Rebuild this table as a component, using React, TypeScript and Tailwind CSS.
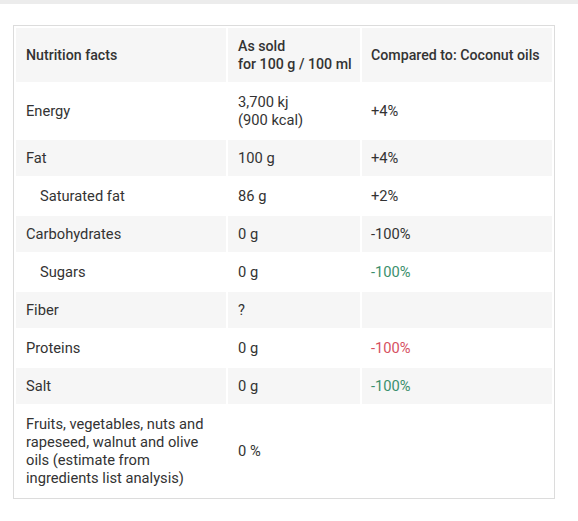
import React from "react";

type Row = {
  label: string;
  sold: React.ReactNode;
  compare?: string;
  tone?: "green" | "red";
  indent?: boolean;
};

const rows: Row[] = [
  { label: "Energy", sold: <>3,700 kj<br />(900 kcal)</>, compare: "+4%" },
  { label: "Fat", sold: "100 g", compare: "+4%" },
  { label: "Saturated fat", sold: "86 g", compare: "+2%", indent: true },
  { label: "Carbohydrates", sold: "0 g", compare: "-100%" },
  { label: "Sugars", sold: "0 g", compare: "-100%", tone: "green", indent: true },
  { label: "Fiber", sold: "?" },
  { label: "Proteins", sold: "0 g", compare: "-100%", tone: "red" },
  { label: "Salt", sold: "0 g", compare: "-100%", tone: "green" },
  {
    label: "Fruits, vegetables, nuts and rapeseed, walnut and olive oils (estimate from ingredients list analysis)",
    sold: "0 %",
  },
];

export default function App() {
  return (
    <div className="min-h-[521px] bg-white text-[14.7px] leading-[18px] text-[#333]" style={{ fontFamily: "Roboto, 'Liberation Sans', sans-serif" }}>
      <div className="h-1 bg-[#ececec]" />
      <div className="ml-[13px] mt-[21px] w-[542px] border border-[#dcdcdc]">
        <table className="w-full table-fixed border-separate border-spacing-[2px] text-left">
          <thead className="text-[14.2px]">
            <tr className="bg-[#f6f6f6]">
              <th className="w-[210px] px-[10px] py-[9px] align-middle font-medium">Nutrition facts</th>
              <th className="w-[132px] whitespace-nowrap px-[10px] py-[9px] align-middle font-medium">
                As sold
                <br />
                for 100 g / 100 ml
              </th>
              <th className="w-[190px] whitespace-nowrap px-[9px] py-[9px] align-middle font-medium">Compared to: Coconut oils</th>
            </tr>
          </thead>
          <tbody>
            {rows.map((r, i) => (
              <tr key={r.label} className={i % 2 === 1 ? "bg-[#f6f6f6]" : "bg-white"}>
                <td className={`py-[9px] pr-[10px] align-middle ${r.indent ? "pl-[24px]" : "pl-[10px]"}`}>{r.label}</td>
                <td className="px-[10px] py-[9px] align-middle">{r.sold}</td>
                <td
                  className={`px-[9px] py-[9px] align-middle ${
                    r.tone === "green" ? "text-[#3b8f6c]" : r.tone === "red" ? "text-[#d6505f]" : ""
                  }`}
                >
                  {r.compare}
                </td>
              </tr>
            ))}
          </tbody>
        </table>
      </div>
    </div>
  );
}
